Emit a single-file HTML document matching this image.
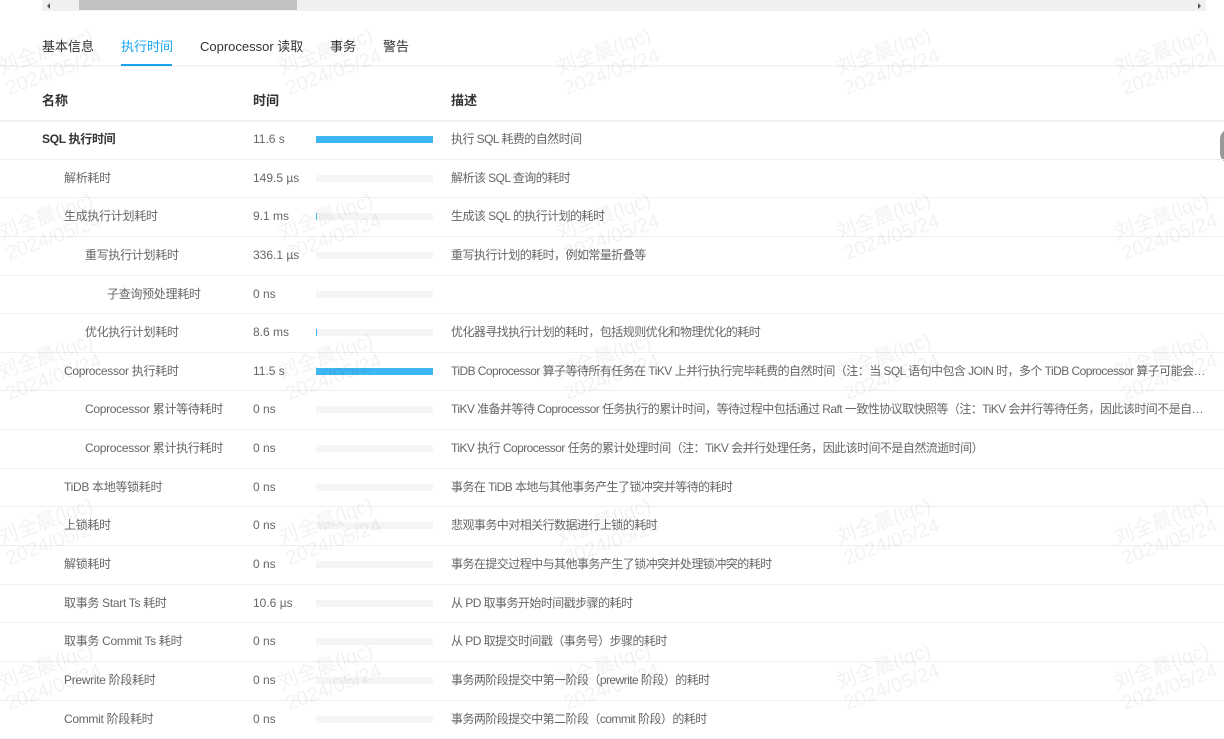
<!DOCTYPE html>
<html><head><meta charset="utf-8"><style>
*{margin:0;padding:0;box-sizing:border-box}
body{width:1224px;height:739px;overflow:hidden;background:#fff;font-family:"Liberation Sans","Noto Sans CJK SC",sans-serif;position:relative;color:#333}
.sb{position:absolute;left:42px;top:0;width:1164px;height:11px;background:#f0f0f0}
.thumb{position:absolute;left:37px;top:0;width:218px;height:10px;background:#c1c1c1}
.tabs{position:absolute;left:0;top:0;width:1224px;height:67px;border-bottom:2px solid #f4f4f4}
.tab{position:absolute;top:38px;font-size:13px;line-height:18px;color:#333}
.act{color:#1aa3f0}
.ul{position:absolute;left:121px;top:64px;width:51px;height:2px;background:#1aa3f0}
.hd{position:absolute;top:92px;font-size:13px;line-height:18px;font-weight:bold;color:#333}
.hline{position:absolute;left:0;top:120px;width:1224px;height:2px;background:#f2f2f2}
.rows{position:absolute;left:0;top:121px;width:1224px}
.r{height:38.65px;position:relative;border-bottom:1px solid #f0f0f0;font-size:12px;color:#666}
.r span{position:absolute;top:10px;line-height:16px;white-space:nowrap;letter-spacing:-0.3px}
.n{left:64px}.n2{left:85px}.n3{left:107px}.n0{left:42px;font-weight:bold;color:#333}
.t{left:253px;letter-spacing:0 !important}
.d{left:451px;width:756px;overflow:hidden;text-overflow:ellipsis;letter-spacing:-0.55px !important}
.bar{position:absolute;left:316px;top:15px;width:117px;height:7px;background:#f5f5f5}
.bar i{position:absolute;left:0;top:0;height:7px;background:#3db6f2}
.wm{position:absolute;color:rgba(0,0,0,0.05);font-size:20px;transform:rotate(-20deg);white-space:pre;line-height:22px}
</style></head><body>
<div class="sb"><div class="thumb"></div>
<div style="position:absolute;left:5px;top:3px;border:3px solid transparent;border-right:3px solid #555;border-left:0"></div>
<div style="position:absolute;right:5px;top:3px;border:3px solid transparent;border-left:3px solid #555;border-right:0"></div></div>
<div class="tabs"></div>
<div class="tab" style="left:42px">基本信息</div>
<div class="tab act" style="left:121px">执行时间</div>
<div class="tab" style="left:200px">Coprocessor 读取</div>
<div class="tab" style="left:330px">事务</div>
<div class="tab" style="left:383px">警告</div>
<div class="ul"></div>
<div class="hd" style="left:42px">名称</div>
<div class="hd" style="left:253px">时间</div>
<div class="hd" style="left:451px">描述</div>
<div class="hline"></div>
<div style="position:absolute;left:1220px;top:129px;width:20px;height:34px;border-radius:17px;background:#999"></div>
<div class="rows">
<div class="r"><span class="n0">SQL 执行时间</span><span class="t">11.6 s</span><div class="bar"><i style="width:117px"></i></div><span class="d">执行 SQL 耗费的自然时间</span></div>
<div class="r"><span class="n">解析耗时</span><span class="t">149.5 µs</span><div class="bar"></div><span class="d">解析该 SQL 查询的耗时</span></div>
<div class="r"><span class="n">生成执行计划耗时</span><span class="t">9.1 ms</span><div class="bar"><i style="width:1px"></i></div><span class="d">生成该 SQL 的执行计划的耗时</span></div>
<div class="r"><span class="n2">重写执行计划耗时</span><span class="t">336.1 µs</span><div class="bar"></div><span class="d">重写执行计划的耗时，例如常量折叠等</span></div>
<div class="r"><span class="n3">子查询预处理耗时</span><span class="t">0 ns</span><div class="bar"></div><span class="d"></span></div>
<div class="r"><span class="n2">优化执行计划耗时</span><span class="t">8.6 ms</span><div class="bar"><i style="width:1px"></i></div><span class="d">优化器寻找执行计划的耗时，包括规则优化和物理优化的耗时</span></div>
<div class="r"><span class="n">Coprocessor 执行耗时</span><span class="t">11.5 s</span><div class="bar"><i style="width:117px"></i></div><span class="d">TiDB Coprocessor 算子等待所有任务在 TiKV 上并行执行完毕耗费的自然时间（注：当 SQL 语句中包含 JOIN 时，多个 TiDB Coprocessor 算子可能会并行执行，此时该时间不是自然流逝时间）</span></div>
<div class="r"><span class="n2">Coprocessor 累计等待耗时</span><span class="t">0 ns</span><div class="bar"></div><span class="d">TiKV 准备并等待 Coprocessor 任务执行的累计时间，等待过程中包括通过 Raft 一致性协议取快照等（注：TiKV 会并行等待任务，因此该时间不是自然流逝时间）</span></div>
<div class="r"><span class="n2">Coprocessor 累计执行耗时</span><span class="t">0 ns</span><div class="bar"></div><span class="d">TiKV 执行 Coprocessor 任务的累计处理时间（注：TiKV 会并行处理任务，因此该时间不是自然流逝时间）</span></div>
<div class="r"><span class="n">TiDB 本地等锁耗时</span><span class="t">0 ns</span><div class="bar"></div><span class="d">事务在 TiDB 本地与其他事务产生了锁冲突并等待的耗时</span></div>
<div class="r"><span class="n">上锁耗时</span><span class="t">0 ns</span><div class="bar"></div><span class="d">悲观事务中对相关行数据进行上锁的耗时</span></div>
<div class="r"><span class="n">解锁耗时</span><span class="t">0 ns</span><div class="bar"></div><span class="d">事务在提交过程中与其他事务产生了锁冲突并处理锁冲突的耗时</span></div>
<div class="r"><span class="n">取事务 Start Ts 耗时</span><span class="t">10.6 µs</span><div class="bar"></div><span class="d">从 PD 取事务开始时间戳步骤的耗时</span></div>
<div class="r"><span class="n">取事务 Commit Ts 耗时</span><span class="t">0 ns</span><div class="bar"></div><span class="d">从 PD 取提交时间戳（事务号）步骤的耗时</span></div>
<div class="r"><span class="n">Prewrite 阶段耗时</span><span class="t">0 ns</span><div class="bar"></div><span class="d">事务两阶段提交中第一阶段（prewrite 阶段）的耗时</span></div>
<div class="r"><span class="n">Commit 阶段耗时</span><span class="t">0 ns</span><div class="bar"></div><span class="d">事务两阶段提交中第二阶段（commit 阶段）的耗时</span></div>
</div>
<div class="wm" style="left:0;top:40px">刘全晨(lqc)
2024/05/24</div>
<div class="wm" style="left:280px;top:40px">刘全晨(lqc)
2024/05/24</div>
<div class="wm" style="left:558px;top:40px">刘全晨(lqc)
2024/05/24</div>
<div class="wm" style="left:838px;top:40px">刘全晨(lqc)
2024/05/24</div>
<div class="wm" style="left:1116px;top:40px">刘全晨(lqc)
2024/05/24</div>
<div class="wm" style="left:0;top:205px">刘全晨(lqc)
2024/05/24</div>
<div class="wm" style="left:280px;top:205px">刘全晨(lqc)
2024/05/24</div>
<div class="wm" style="left:558px;top:205px">刘全晨(lqc)
2024/05/24</div>
<div class="wm" style="left:838px;top:205px">刘全晨(lqc)
2024/05/24</div>
<div class="wm" style="left:1116px;top:205px">刘全晨(lqc)
2024/05/24</div>
<div class="wm" style="left:0;top:345px">刘全晨(lqc)
2024/05/24</div>
<div class="wm" style="left:280px;top:345px">刘全晨(lqc)
2024/05/24</div>
<div class="wm" style="left:558px;top:345px">刘全晨(lqc)
2024/05/24</div>
<div class="wm" style="left:838px;top:345px">刘全晨(lqc)
2024/05/24</div>
<div class="wm" style="left:1116px;top:345px">刘全晨(lqc)
2024/05/24</div>
<div class="wm" style="left:0;top:510px">刘全晨(lqc)
2024/05/24</div>
<div class="wm" style="left:280px;top:510px">刘全晨(lqc)
2024/05/24</div>
<div class="wm" style="left:558px;top:510px">刘全晨(lqc)
2024/05/24</div>
<div class="wm" style="left:838px;top:510px">刘全晨(lqc)
2024/05/24</div>
<div class="wm" style="left:1116px;top:510px">刘全晨(lqc)
2024/05/24</div>
<div class="wm" style="left:0;top:655px">刘全晨(lqc)
2024/05/24</div>
<div class="wm" style="left:280px;top:655px">刘全晨(lqc)
2024/05/24</div>
<div class="wm" style="left:558px;top:655px">刘全晨(lqc)
2024/05/24</div>
<div class="wm" style="left:838px;top:655px">刘全晨(lqc)
2024/05/24</div>
<div class="wm" style="left:1116px;top:655px">刘全晨(lqc)
2024/05/24</div>
</body></html>
